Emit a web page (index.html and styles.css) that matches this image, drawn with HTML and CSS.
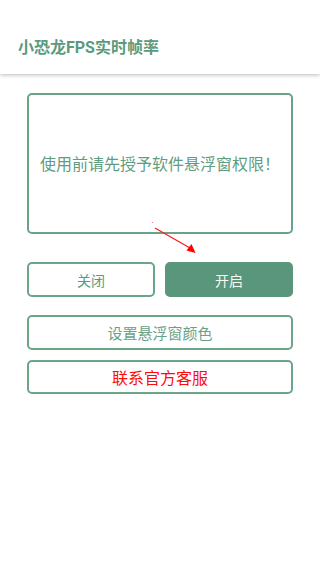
FILE: index.html
```html
<!DOCTYPE html>
<html lang="zh-CN">
<head>
<meta charset="utf-8">
<meta name="viewport" content="width=device-width, initial-scale=1">
<title>小恐龙FPS实时帧率</title>
<link rel="stylesheet" href="styles.css">
</head>
<body>
<header class="appbar">
  <h1 class="title">小恐龙FPS实时帧率</h1>
</header>
<main class="content">
  <div class="notice">使用前请先授予软件悬浮窗权限！</div>
  <div class="row">
    <button class="btn btn-outline">关闭</button>
    <button class="btn btn-filled">开启</button>
  </div>
  <button class="btn btn-outline btn-wide first">设置悬浮窗颜色</button>
  <button class="btn btn-outline btn-wide btn-red">联系官方客服</button>
</main>
<svg class="arrow" width="320" height="569" viewBox="0 0 320 569">
  <circle cx="152.5" cy="222.5" r="0.6" fill="#ff6060"/>
  <line x1="155" y1="228" x2="190" y2="248" stroke="#ff1a1a" stroke-width="1.3"/>
  <polygon points="195.5,253 186.5,250.5 191.5,244" fill="#ff0000"/>
</svg>
</body>
</html>
```
FILE: styles.css
```css
html, body {
  margin: 0;
  padding: 0;
  background: #ffffff;
}
body {
  width: 320px;
  height: 569px;
  position: relative;
  overflow: hidden;
  font-family: "Noto Sans CJK SC", "Noto Sans", Roboto, sans-serif;
}
.appbar {
  height: 74px;
  background: #ffffff;
  box-shadow: 0 1px 4px rgba(0, 0, 0, 0.28);
  display: flex;
  align-items: flex-start;
  padding: 38px 0 0 18px;
  box-sizing: border-box;
  position: relative;
  z-index: 1;
}
.title {
  margin: 0;
  font-size: 16px;
  line-height: 20px;
  font-weight: 700;
  color: #5b9a7d;
  font-family: Roboto, "Noto Sans CJK SC", sans-serif;
}
.content {
  padding: 19px 27px 0 27px;
  display: flex;
  flex-direction: column;
}
.notice {
  height: 141px;
  box-sizing: border-box;
  border: 2px solid #69a488;
  border-radius: 5px;
  display: flex;
  align-items: center;
  justify-content: center;
  font-size: 16px;
  line-height: 20px;
  color: #5f9d80;
  padding-bottom: 2px;
}
.row {
  display: flex;
  gap: 10px;
  margin-top: 28px;
}
.btn {
  height: 35px;
  box-sizing: border-box;
  border-radius: 5px;
  font-family: "Noto Sans CJK SC", sans-serif;
  font-size: 14px;
  line-height: 18px;
  padding: 0;
  margin: 0;
  cursor: pointer;
}
.row .btn {
  flex: 1;
}
.btn-outline {
  background: #ffffff;
  border: 2px solid #6aa58a;
  color: #5b9a7d;
}
.btn-filled {
  background: #5a967b;
  border: 2px solid #5a967b;
  color: #f4faf6;
}
.btn-wide {
  width: 100%;
  font-size: 15px;
  line-height: 20px;
  color: #6aa187;
}
.first {
  margin-top: 18px;
}
.btn-red {
  margin-top: 10px;
  height: 34px;
  font-size: 16px;
  color: #ff0a0a;
}
.arrow {
  position: absolute;
  left: 0;
  top: 0;
  pointer-events: none;
}
```
